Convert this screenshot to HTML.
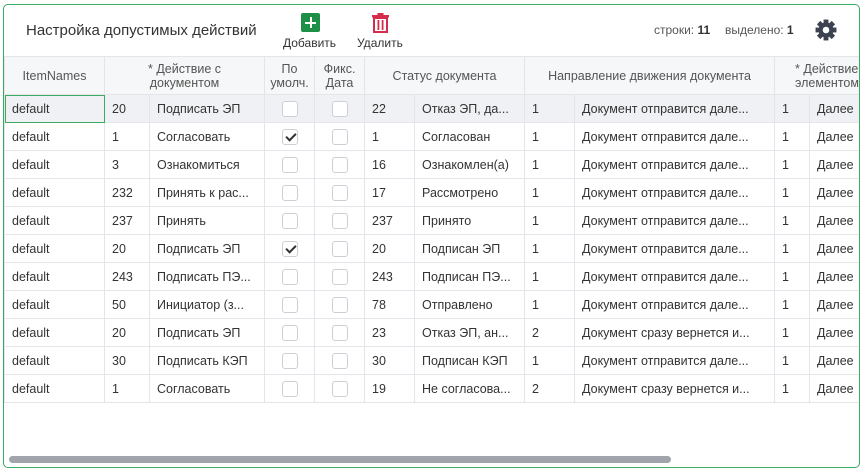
<!DOCTYPE html>
<html><head><meta charset="utf-8"><style>
*{box-sizing:border-box;margin:0;padding:0}
body{width:863px;height:472px;background:#fff;font-family:"Liberation Sans","DejaVu Sans",sans-serif;color:#333;position:relative;overflow:hidden}
.frame{position:absolute;left:3px;top:4px;width:857px;height:464px;border:1px solid #3daa62;border-radius:5px;overflow:hidden}
.title{position:absolute;left:22px;top:17px;font-size:15px;color:#333}
.btn{position:absolute;top:31px;font-size:12px;color:#333}
.info{position:absolute;top:18px;font-size:12px;color:#555}
.info b{color:#333}
table{position:absolute;left:0;top:51px;border-collapse:collapse;table-layout:fixed;width:860px}
td,th{border:1px solid #e3e5ea;height:28px;font-size:12.5px;white-space:nowrap;overflow:hidden;text-overflow:ellipsis;padding:0 7px;font-weight:normal;text-align:left}
th{background:#f6f7f9;color:#555;height:38px;text-align:center;line-height:14px;font-size:12.5px;padding:0 2px;text-overflow:clip}
tr.sel td{background:#f0f1f4}
td.sel{outline:1px solid #3daa62;outline-offset:-1px}
.cb{display:block;margin:0 auto;width:16px;height:16px;border:1px solid #ccd0d6;border-radius:3px;background:#fff;position:relative}
.cb.on::after{content:"";position:absolute;left:5px;top:1px;width:4px;height:8px;border:solid #333;border-width:0 2px 2px 0;transform:rotate(45deg)}
td.c{padding:0}
.scroll{position:absolute;left:5px;top:451px;width:662px;height:7px;border-radius:4px;background:#a1a4aa}
</style></head><body>
<div class="frame">
<div class="title">Настройка допустимых действий</div>
<div style="position:absolute;left:297px;top:8px;width:19px;height:19px;background:#1e8f47;border-radius:2px">
<div style="position:absolute;left:4px;top:8.5px;width:11px;height:2px;background:#fff"></div>
<div style="position:absolute;left:8.5px;top:4px;width:2px;height:11px;background:#fff"></div></div>
<div class="btn" style="left:279px">Добавить</div>
<svg style="position:absolute;left:368px;top:8px" width="17" height="20" viewBox="0 0 17 20"><rect x="0" y="2" width="17" height="2.5" fill="#d62b4b"/><rect x="5.5" y="0" width="6" height="3" fill="#d62b4b"/><path d="M2 5h13v14H2z" fill="none" stroke="#d62b4b" stroke-width="2"/><rect x="5.5" y="7" width="1.8" height="10" fill="#d62b4b"/><rect x="9.7" y="7" width="1.8" height="10" fill="#d62b4b"/></svg>
<div class="btn" style="left:353px">Удалить</div>
<div class="info" style="left:650px">строки: <b>11</b></div>
<div class="info" style="left:721px">выделено: <b>1</b></div>
<svg style="position:absolute;left:811px;top:14px" width="22" height="22" viewBox="0 0 20 20"><g fill="#3d4250"><circle cx="10" cy="10" r="6.8"/><g id="t"><rect x="7.8" y="0.5" width="4.4" height="4.5"/><rect x="7.8" y="15" width="4.4" height="4.5"/></g><use href="#t" transform="rotate(45 10 10)"/><use href="#t" transform="rotate(90 10 10)"/><use href="#t" transform="rotate(135 10 10)"/></g><circle cx="10" cy="10" r="3" fill="#fff"/></svg>
<table>
<colgroup><col style="width:100px"><col style="width:45px"><col style="width:115px"><col style="width:50px"><col style="width:50px"><col style="width:50px"><col style="width:110px"><col style="width:50px"><col style="width:200px"><col style="width:35px"><col style="width:55px"></colgroup>
<tr><th>ItemNames</th><th colspan="2">* Действие с<br>документом</th><th>По<br>умолч.</th><th>Фикс.<br>Дата</th><th colspan="2">Статус документа</th><th colspan="2">Направление движения документа</th><th colspan="2" style="text-align:left;padding-left:20px">* Действие с<br>элементом э</th></tr>
<tr class="sel"><td class="sel">default</td><td>20</td><td>Подписать ЭП</td><td class="c"><span class="cb"></span></td><td class="c"><span class="cb"></span></td><td>22</td><td>Отказ ЭП, да...</td><td>1</td><td>Документ отправится дале...</td><td>1</td><td>Далее</td></tr>
<tr><td>default</td><td>1</td><td>Согласовать</td><td class="c"><span class="cb on"></span></td><td class="c"><span class="cb"></span></td><td>1</td><td>Согласован</td><td>1</td><td>Документ отправится дале...</td><td>1</td><td>Далее</td></tr>
<tr><td>default</td><td>3</td><td>Ознакомиться</td><td class="c"><span class="cb"></span></td><td class="c"><span class="cb"></span></td><td>16</td><td>Ознакомлен(а)</td><td>1</td><td>Документ отправится дале...</td><td>1</td><td>Далее</td></tr>
<tr><td>default</td><td>232</td><td>Принять к рас...</td><td class="c"><span class="cb"></span></td><td class="c"><span class="cb"></span></td><td>17</td><td>Рассмотрено</td><td>1</td><td>Документ отправится дале...</td><td>1</td><td>Далее</td></tr>
<tr><td>default</td><td>237</td><td>Принять</td><td class="c"><span class="cb"></span></td><td class="c"><span class="cb"></span></td><td>237</td><td>Принято</td><td>1</td><td>Документ отправится дале...</td><td>1</td><td>Далее</td></tr>
<tr><td>default</td><td>20</td><td>Подписать ЭП</td><td class="c"><span class="cb on"></span></td><td class="c"><span class="cb"></span></td><td>20</td><td>Подписан ЭП</td><td>1</td><td>Документ отправится дале...</td><td>1</td><td>Далее</td></tr>
<tr><td>default</td><td>243</td><td>Подписать ПЭ...</td><td class="c"><span class="cb"></span></td><td class="c"><span class="cb"></span></td><td>243</td><td>Подписан ПЭ...</td><td>1</td><td>Документ отправится дале...</td><td>1</td><td>Далее</td></tr>
<tr><td>default</td><td>50</td><td>Инициатор (з...</td><td class="c"><span class="cb"></span></td><td class="c"><span class="cb"></span></td><td>78</td><td>Отправлено</td><td>1</td><td>Документ отправится дале...</td><td>1</td><td>Далее</td></tr>
<tr><td>default</td><td>20</td><td>Подписать ЭП</td><td class="c"><span class="cb"></span></td><td class="c"><span class="cb"></span></td><td>23</td><td>Отказ ЭП, ан...</td><td>2</td><td>Документ сразу вернется и...</td><td>1</td><td>Далее</td></tr>
<tr><td>default</td><td>30</td><td>Подписать КЭП</td><td class="c"><span class="cb"></span></td><td class="c"><span class="cb"></span></td><td>30</td><td>Подписан КЭП</td><td>1</td><td>Документ отправится дале...</td><td>1</td><td>Далее</td></tr>
<tr><td>default</td><td>1</td><td>Согласовать</td><td class="c"><span class="cb"></span></td><td class="c"><span class="cb"></span></td><td>19</td><td>Не согласова...</td><td>2</td><td>Документ сразу вернется и...</td><td>1</td><td>Далее</td></tr>
</table>
<div class="scroll"></div>
</div>
</body></html>
